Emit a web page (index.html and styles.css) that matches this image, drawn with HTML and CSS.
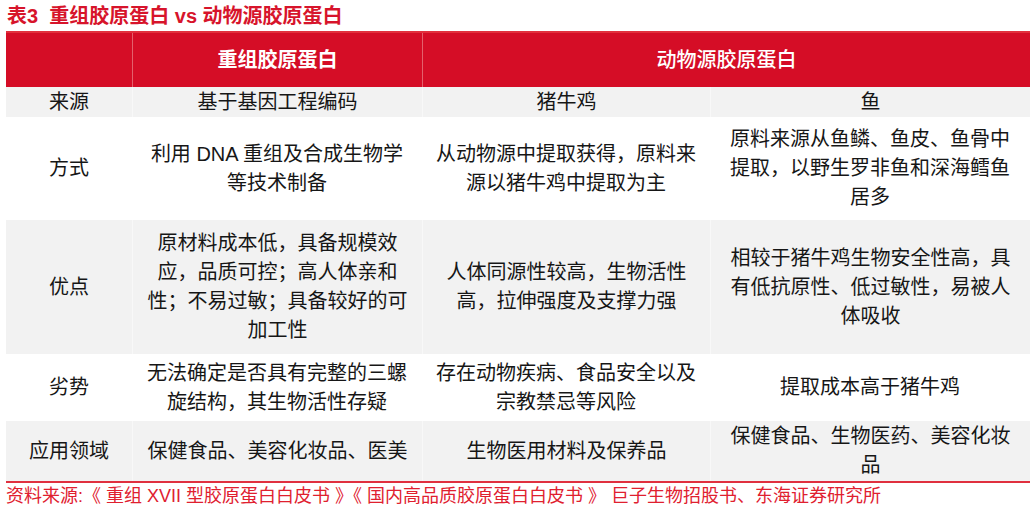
FILE: index.html
```html
<!DOCTYPE html>
<html lang="zh-CN">
<head>
<meta charset="utf-8">
<title>表3 重组胶原蛋白 vs 动物源胶原蛋白</title>
<link rel="stylesheet" href="styles.css">
</head>
<body>
<div class="page">
  <div class="title">表3&nbsp; 重组胶原蛋白 vs 动物源胶原蛋白</div>
  <div class="table">
    <div class="row head">
      <div class="cell"></div>
      <div class="cell h1">重组胶原蛋白</div>
      <div class="cell h2">动物源胶原蛋白</div>
    </div>
    <div class="row gray r1">
      <div class="cell">来源</div>
      <div class="cell">基于基因工程编码</div>
      <div class="cell">猪牛鸡</div>
      <div class="cell c4">鱼</div>
    </div>
    <div class="row r2">
      <div class="cell">方式</div>
      <div class="cell">利用 DNA 重组及合成生物学等技术制备</div>
      <div class="cell">从动物源中提取获得，原料来源以猪牛鸡中提取为主</div>
      <div class="cell c4">原料来源从鱼鳞、鱼皮、鱼骨中提取，以野生罗非鱼和深海鳕鱼居多</div>
    </div>
    <div class="row gray r3">
      <div class="cell">优点</div>
      <div class="cell">原材料成本低，具备规模效应，品质可控；高人体亲和性；不易过敏；具备较好的可加工性</div>
      <div class="cell">人体同源性较高，生物活性高，拉伸强度及支撑力强</div>
      <div class="cell c4">相较于猪牛鸡生物安全性高，具有低抗原性、低过敏性，易被人体吸收</div>
    </div>
    <div class="row r4">
      <div class="cell">劣势</div>
      <div class="cell">无法确定是否具有完整的三螺旋结构，其生物活性存疑</div>
      <div class="cell">存在动物疾病、食品安全以及宗教禁忌等风险</div>
      <div class="cell c4">提取成本高于猪牛鸡</div>
    </div>
    <div class="row gray r5">
      <div class="cell">应用领域</div>
      <div class="cell">保健食品、美容化妆品、医美</div>
      <div class="cell">生物医用材料及保养品</div>
      <div class="cell c4">保健食品、生物医药、美容化妆品</div>
    </div>
  </div>
  <div class="source">资料来源:《 重组 XVII 型胶原蛋白白皮书 》《 国内高品质胶原蛋白白皮书 》 巨子生物招股书、东海证券研究所</div>
</div>
</body>
</html>
```

FILE: styles.css
```css
* { box-sizing: border-box; }
html, body { margin: 0; padding: 0; background: #ffffff; }
body {
  font-family: "Liberation Sans", "Noto Sans CJK SC", sans-serif;
  color: #161616;
}
.page {
  width: 1035px;
  padding: 0 5px 0 6px;
}
.title {
  padding-top: 2px;
  height: 31px;
  line-height: 29px;
  font-size: 20px;
  font-weight: bold;
  color: #d7142b;
  padding-left: 1px;
}
.table {
  width: 1024px;
  border-bottom: 2px solid #e0303f;
}
.row {
  display: grid;
  grid-template-columns: 126px 290px 288px 320px;
}
.row.gray { background: #f2f2f2; }
.row.head {
  grid-template-columns: 126px 290px 608px;
  background: #d50d26;
  border-top: 2px solid #e2303d;
  height: 56px;
}
.cell {
  display: flex;
  align-items: center;
  justify-content: center;
  text-align: center;
  font-size: 20px;
  line-height: 29px;
  padding: 0 11px;
}
.row.gray .cell + .cell { border-left: 1px solid #f8f8f8; }
.cell.c4 { padding: 0 12px; }
.head .cell {
  color: #ffffff;
  font-size: 20px;
}
.head .cell + .cell { border-left: 1px solid #e4606c; }
.head .h1 { font-weight: bold; }
.head .h2 { font-weight: 500; }
.r1 { height: 30px; }
.r2 { height: 103px; }
.r3 { height: 134px; }
.r4 { height: 67px; }
.r5 { height: 60px; }
.source {
  margin-top: 2px;
  font-size: 18px;
  line-height: 22px;
  color: #e0202f;
  white-space: nowrap;
}
```
